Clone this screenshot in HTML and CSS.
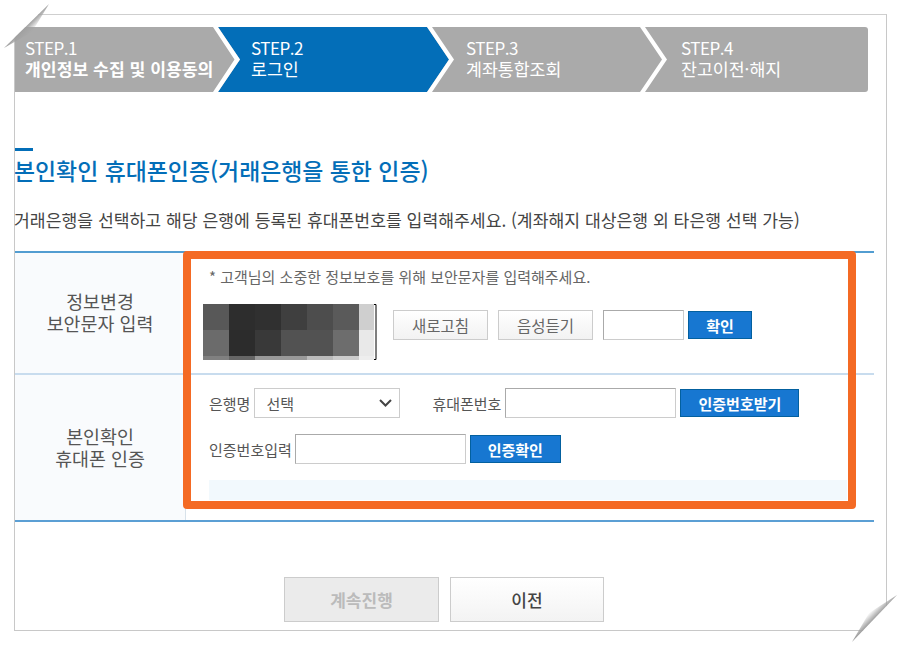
FILE: index.html
```html
<!DOCTYPE html>
<html lang="ko">
<head>
<meta charset="utf-8">
<title>본인확인 휴대폰인증</title>
<link rel="stylesheet" href="styles.css">
</head>
<body>
<main class="frame">
  <nav class="stepper">
    <svg class="stepper-art" width="853" height="65" viewBox="0 0 853 65">
      <polygon fill="#036eb8" points="203,0 412,0 434,32.5 412,65 203,65 225,32.5"/>
      <polygon fill="#fff" points="198,0 203,0 225,32.5 203,65 198,65 219.500,32.500"/>
      <polygon fill="#fff" points="412,0 417,0 439,32.5 417,65 412,65 434,32.5"/>
      <polygon fill="#fff" points="625,0 630,0 652,32.5 630,65 625,65 647,32.5"/>
    </svg>
    <div class="step step-first"><span class="step-no">STEP.1</span><span class="step-name step-name-bold">개인정보 수집 및 이용동의</span></div>
    <div class="step"><span class="step-no">STEP.2</span><span class="step-name">로그인</span></div>
    <div class="step"><span class="step-no">STEP.3</span><span class="step-name">계좌통합조회</span></div>
    <div class="step step-last"><span class="step-no">STEP.4</span><span class="step-name">잔고이전·해지</span></div>
  </nav>

  <div class="title-bar"></div>
  <h1 class="title">본인확인 휴대폰인증(거래은행을 통한 인증)</h1>
  <p class="desc">거래은행을 선택하고 해당 은행에 등록된 휴대폰번호를 입력해주세요. (계좌해지 대상은행 외 타은행 선택 가능)</p>

  <section class="table">
    <div class="row row-one">
      <div class="head">정보변경<br>보안문자 입력</div>
      <div class="cell cell-captcha">
        <p class="note">* 고객님의 소중한 정보보호를 위해 보안문자를 입력해주세요.</p>
        <div class="captcha-line">
          <svg class="captcha" width="174" height="56" viewBox="0 0 174 56">
            <rect width="174" height="56" fill="#fff"/>
            <rect x="0" y="0" width="26" height="26" fill="#585858"/>
            <rect x="26" y="0" width="26" height="26" fill="#2d2d2d"/>
            <rect x="52" y="0" width="26" height="26" fill="#303030"/>
            <rect x="78" y="0" width="26" height="26" fill="#3f3f3f"/>
            <rect x="104" y="0" width="26" height="26" fill="#4d4d4d"/>
            <rect x="130" y="0" width="26" height="26" fill="#5a5a5a"/>
            <rect x="156" y="0" width="15" height="26" fill="#cfcfcf"/>
            <rect x="0" y="26" width="26" height="26" fill="#6b6b6b"/>
            <rect x="26" y="26" width="26" height="26" fill="#2c2c2c"/>
            <rect x="52" y="26" width="26" height="26" fill="#393939"/>
            <rect x="78" y="26" width="52" height="26" fill="#525252"/>
            <rect x="130" y="26" width="26" height="26" fill="#6d6d6d"/>
            <rect x="156" y="26" width="15" height="26" fill="#e9e9e9"/>
            <rect x="0" y="52" width="26" height="4" fill="#808080"/>
            <rect x="26" y="52" width="26" height="4" fill="#666"/>
            <rect x="52" y="52" width="26" height="4" fill="#999"/>
            <rect x="78" y="52" width="26" height="4" fill="#999"/>
            <rect x="104" y="52" width="26" height="4" fill="#bbb"/>
            <rect x="130" y="52" width="26" height="4" fill="#ccc"/>
            <rect x="156" y="52" width="15" height="4" fill="#eee"/>
            <polyline points="171,0.500 173,0.500 173,55.500 171,55.500" fill="none" stroke="#000" stroke-width="1"/>
          </svg>
          <button class="btn-light btn-refresh" type="button">새로고침</button>
          <button class="btn-light btn-audio" type="button">음성듣기</button>
          <input class="field field-captcha" type="text" aria-label="보안문자">
          <button class="btn-blue btn-ok" type="button">확인</button>
        </div>
      </div>
    </div>
    <div class="row row-two">
      <div class="head head-two">본인확인<br>휴대폰 인증</div>
      <div class="cell cell-phone">
        <div class="form-line form-line-one">
          <label class="label">은행명</label>
          <div class="select-wrap">
            <select class="select"><option>선택</option></select>
            <svg class="select-arrow" width="13" height="8" viewBox="0 0 13 8"><polyline points="1,1 6.500,6.500 12,1" fill="none" stroke="#444" stroke-width="2"/></svg>
          </div>
          <label class="label label-phone">휴대폰번호</label>
          <input class="field field-long" type="text" aria-label="휴대폰번호">
          <button class="btn-blue btn-send" type="button">인증번호받기</button>
        </div>
        <div class="form-line form-line-two">
          <label class="label">인증번호입력</label>
          <input class="field field-long field-code" type="text" aria-label="인증번호입력">
          <button class="btn-blue btn-verify" type="button">인증확인</button>
        </div>
        <div class="panel"></div>
      </div>
    </div>
    <div class="highlight"></div>
  </section>

  <div class="actions">
    <button class="btn-action btn-disabled" type="button">계속진행</button>
    <button class="btn-action btn-prev" type="button">이전</button>
  </div>
</main>

<svg class="corner corner-tl" width="60" height="60" viewBox="0 0 60 60">
  <defs>
    <linearGradient id="shadeTl" x1="26.500" y1="26" x2="32" y2="31.500" gradientUnits="userSpaceOnUse">
      <stop offset="0" stop-color="#a0a0a0"/>
      <stop offset="1" stop-color="#a0a0a0" stop-opacity="0"/>
    </linearGradient>
  </defs>
  <polygon fill="#fff" points="0,0 49,0 49,4 4,48 0,48"/>
  <polygon fill="url(#shadeTl)" points="49,4 4,48 32,32"/>
</svg>
<svg class="corner corner-br" width="60" height="60" viewBox="0 0 60 60">
  <defs>
    <linearGradient id="shadeBr" x1="33.500" y1="33.500" x2="28" y2="28" gradientUnits="userSpaceOnUse">
      <stop offset="0" stop-color="#a0a0a0"/>
      <stop offset="1" stop-color="#a0a0a0" stop-opacity="0"/>
    </linearGradient>
  </defs>
  <polygon fill="#fff" points="60,60 11,60 11,57 56,10 60,10"/>
  <polygon fill="url(#shadeBr)" points="56,10 11,57 28,28"/>
</svg>
</body>
</html>
```
FILE: styles.css
```css
* { box-sizing: border-box; }
html, body { margin: 0; padding: 0; background: #fff; }
body {
  width: 901px;
  height: 645px;
  overflow: hidden;
  position: relative;
  font-family: "Noto Sans CJK KR", "Noto Sans", sans-serif;
  color: #555;
}
button, input, select { font-family: inherit; margin: 0; padding: 0; border-radius: 0; }

.frame {
  width: 873px;
  height: 617px;
  margin: 14px 0 0 14px;
  padding-top: 12px;
  border: 1px solid #c8c8c8;
  border-top-color: #cfcfcf;
}

.stepper {
  position: relative;
  display: flex;
  width: 853px;
  height: 65px;
  background: #aaa;
  border-radius: 0 3px 3px 0;
  color: #fff;
}
.stepper-art { position: absolute; left: 0; top: 0; }
.step {
  position: relative;
  display: flex;
  flex-direction: column;
  width: 215px;
  padding: 10px 0 0 10px;
}
.step-first { width: 226px; }
.step-last { flex: 1; }
.step-no { font-size: 17px; line-height: 22px; font-weight: 400; letter-spacing: -0.5px; }
.step-name { font-size: 17.300px; line-height: 20px; white-space: nowrap; }
.step-name-bold { font-weight: 700; font-size: 17.200px; }

.title-bar { width: 18px; height: 3px; margin-top: 56px; background: #036eb8; }
.title {
  margin: 3px 0 0 -1px;
  font-size: 22.900px;
  line-height: 32px;
  font-weight: 500;
  color: #036eb8;
  white-space: nowrap;
}
.desc {
  margin: 22px 0 0 -1px;
  font-size: 17.200px;
  line-height: 24px;
  color: #444;
  white-space: nowrap;
}

.table {
  position: relative;
  width: 859px;
  margin-top: 19px;
  border-top: 2px solid #529dd1;
  border-bottom: 2px solid #5b9fd4;
}
.row { display: flex; }
.row-one { height: 122px; border-bottom: 2px solid #c8dcee; }
.row-two { height: 145px; }
.head {
  display: flex;
  align-items: center;
  justify-content: center;
  width: 171px;
  padding-bottom: 2px;
  text-align: center;
  background: #f9fbfd;
  border-right: 1px solid #d8e2ea;
  font-size: 18.400px;
  line-height: 22px;
  color: #555;
}
.cell { flex: 1; }
.cell-captcha { padding: 14px 0 0 17px; }
.note { margin: 0 0 0 6px; font-size: 15px; line-height: 20px; color: #666; white-space: nowrap; }
.captcha-line { display: flex; align-items: flex-start; margin-top: 17px; height: 56px; }
.captcha { flex: none; }
.btn-light {
  height: 30px;
  width: 95px;
  margin-top: 6px;
  border: 1px solid #ccc;
  background: linear-gradient(#fff, #f2f2f2);
  font-size: 15.500px;
  color: #666;
}
.btn-refresh { margin-left: 16px; }
.btn-audio { margin-left: 10px; }
.field {
  height: 30px;
  border: 1px solid #ccc;
  border-top-color: #aaa;
  border-left-color: #aaa;
  background: #fff;
}
.field-captcha { width: 81px; margin: 6px 0 0 10px; }
.btn-blue {
  height: 28px;
  border: 1px solid #03609f;
  background: #1777d1;
  color: #fff;
  font-size: 15px;
  font-weight: 700;
}
.btn-ok { width: 64px; margin: 7px 0 0 4px; }
.cell-phone { padding: 13px 27px 0 23px; }
.form-line { display: flex; align-items: center; height: 30px; }
.form-line-two { margin-top: 16px; }
.label { font-size: 15px; color: #555; white-space: nowrap; }
.select-wrap { position: relative; margin-left: 4px; }
.select {
  display: block;
  width: 146px;
  height: 30px;
  padding-left: 11px;
  border: 1px solid #ccc;
  background: #fff;
  font-size: 15px;
  color: #555;
  appearance: none;
}
.select-arrow { position: absolute; right: 8px; top: 11px; }
.label-phone { margin-left: 32px; }
.field-long { width: 171px; margin-left: 4px; }
.field-code { margin-left: 3px; }
.btn-send { width: 119px; margin-left: 4px; }
.btn-verify { width: 91px; margin-left: 4px; }
.panel { height: 20px; margin-top: 16px; background: #f2f9fd; }

.highlight {
  position: absolute;
  left: 168px;
  top: -2px;
  width: 673px;
  height: 258px;
  border: 8px solid #f46a24;
  border-radius: 4px;
}

.actions { display: flex; gap: 11px; margin-top: 55px; padding-left: 269px; }
.btn-action {
  width: 155px;
  height: 45px;
  border: 1px solid #ccc;
  font-size: 17px;
  font-weight: 500;
}
.btn-disabled { background: #ebebeb; color: #bbb; font-weight: 700; }
.btn-prev { width: 154px; background: linear-gradient(#fff, #f3f3f3); color: #444; }

.corner { position: absolute; }
.corner-tl { left: 0; top: 0; }
.corner-br { left: 841px; top: 585px; }
```
